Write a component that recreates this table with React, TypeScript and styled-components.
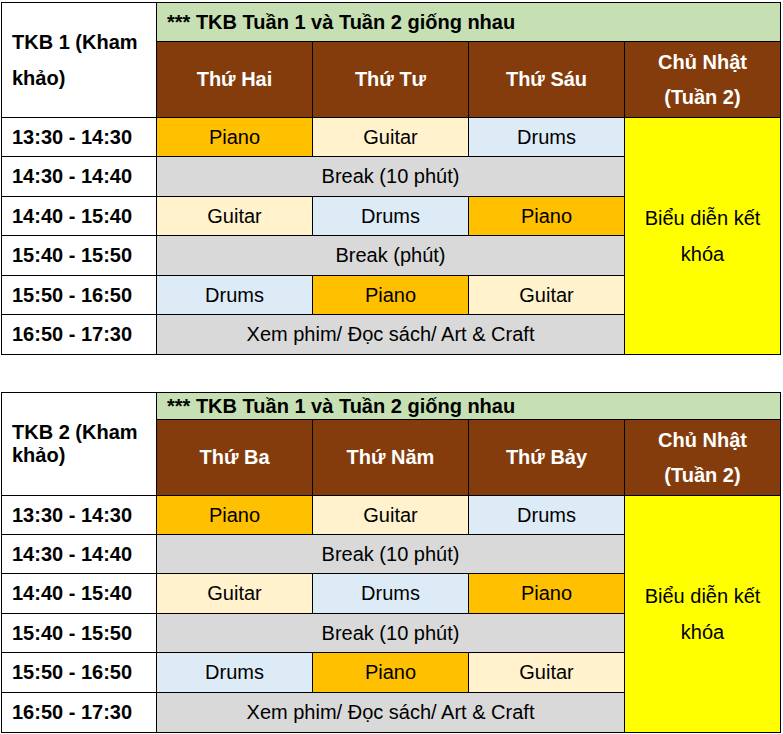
import * as React from 'react';
import styled, { createGlobalStyle } from 'styled-components';

const GlobalStyle = createGlobalStyle`
    body {
        margin: 0;
        background: #ffffff;
        font-family: 'Liberation Sans', Arial, sans-serif;
        color: #000000;
    }
`;

const COLORS: Record<string, string> = {
    Piano: '#ffc000',
    Guitar: '#fff2cc',
    Drums: '#ddebf7',
};

type Slot = { time: string; lessons?: string[]; note?: string };

const SCHEDULES = [
    {
        label: 'TKB 1 (Kham khảo)',
        labelLine: 36,
        titleHeight: 38,
        days: ['Thứ Hai', 'Thứ Tư', 'Thứ Sáu'],
        rows: [38, 39, 38, 39, 38, 39],
        slots: [
            { time: '13:30 - 14:30', lessons: ['Piano', 'Guitar', 'Drums'] },
            { time: '14:30 - 14:40', note: 'Break (10 phút)' },
            { time: '14:40 - 15:40', lessons: ['Guitar', 'Drums', 'Piano'] },
            { time: '15:40 - 15:50', note: 'Break (phút)' },
            { time: '15:50 - 16:50', lessons: ['Drums', 'Piano', 'Guitar'] },
            { time: '16:50 - 17:30', note: 'Xem phim/ Đọc sách/ Art & Craft' },
        ] as Slot[],
    },
    {
        label: 'TKB 2 (Kham khảo)',
        labelLine: 23,
        titleHeight: 26,
        days: ['Thứ Ba', 'Thứ Năm', 'Thứ Bảy'],
        rows: [38, 38, 39, 38, 39, 39],
        slots: [
            { time: '13:30 - 14:30', lessons: ['Piano', 'Guitar', 'Drums'] },
            { time: '14:30 - 14:40', note: 'Break (10 phút)' },
            { time: '14:40 - 15:40', lessons: ['Guitar', 'Drums', 'Piano'] },
            { time: '15:40 - 15:50', note: 'Break (10 phút)' },
            { time: '15:50 - 16:50', lessons: ['Drums', 'Piano', 'Guitar'] },
            { time: '16:50 - 17:30', note: 'Xem phim/ Đọc sách/ Art & Craft' },
        ] as Slot[],
    },
];

export default function App() {
    return (
        <Page>
            <GlobalStyle/>
            {SCHEDULES.map((s) => (
                <Timetable key={s.label} $rows={[s.titleHeight, 75, ...s.rows]}>
                    <LabelCell $line={s.labelLine}>{s.label}</LabelCell>
                    <TitleCell>*** TKB Tuần 1 và Tuần 2 giống nhau</TitleCell>
                    {s.days.map((d) => (
                        <DayCell key={d}>{d}</DayCell>
                    ))}
                    <DayCell>Chủ Nhật (Tuần 2)</DayCell>
                    {s.slots.map((slot, i) => (
                        <React.Fragment key={slot.time}>
                            <TimeCell>{slot.time}</TimeCell>
                            {slot.lessons
                                ? slot.lessons.map((l, j) => (
                                    <LessonCell key={j} $bg={COLORS[l]}>{l}</LessonCell>
                                ))
                                : <BreakCell>{slot.note}</BreakCell>}
                            {i === 0 && <ShowCell>Biểu diễn kết khóa</ShowCell>}
                        </React.Fragment>
                    ))}
                </Timetable>
            ))}
        </Page>
    );
}

const Page = styled.div`
    display: flex;
    flex-direction: column;
    gap: 37px;
    padding: 2px 0 0 1px;
`;

const Timetable = styled.div<{ $rows: number[] }>`
    display: grid;
    grid-template-columns: 154px repeat(4, 155px);
    grid-template-rows: ${(p) => p.$rows.map((r) => `${r}px`).join(' ')};
    gap: 1px;
    padding: 1px;
    width: max-content;
    background: #000000;
    font-size: 20px;
`;

const Cell = styled.div`
    display: flex;
    align-items: center;
    justify-content: center;
    text-align: center;
    background: #ffffff;
    line-height: 23px;
`;

const LabelCell = styled(Cell)<{ $line: number }>`
    grid-row: span 2;
    justify-content: flex-start;
    text-align: left;
    padding: 0 10px;
    font-weight: bold;
    line-height: ${(p) => p.$line}px;
`;

const TitleCell = styled(Cell)`
    grid-column: span 4;
    justify-content: flex-start;
    padding: 0 10px;
    background: #c6e0b4;
    font-weight: bold;
`;

const DayCell = styled(Cell)`
    padding: 0 10px;
    background: #843c0c;
    color: #ffffff;
    font-weight: bold;
    line-height: 35px;
`;

const TimeCell = styled(Cell)`
    justify-content: flex-start;
    padding: 0 10px;
    font-weight: bold;
`;

const LessonCell = styled(Cell)<{ $bg: string }>`
    background: ${(p) => p.$bg};
`;

const BreakCell = styled(Cell)`
    grid-column: span 3;
    background: #d9d9d9;
`;

const ShowCell = styled(Cell)`
    grid-row: span 6;
    padding: 0 10px;
    background: #ffff00;
    line-height: 36px;
`;
